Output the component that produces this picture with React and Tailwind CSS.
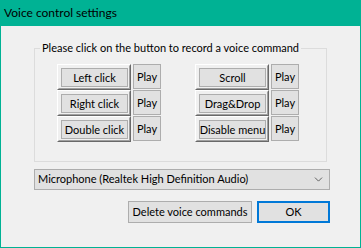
import { ChevronDown } from "lucide-react";

const font = { fontFamily: 'Lato, "Liberation Sans", sans-serif' };

function Toggle({ label }) {
  return (
    <div className="w-[74px] h-[26px] border border-t-white border-l-white border-r-[#696969] border-b-[#696969]">
      <div className="w-full h-full border border-t-[#f0f0f0] border-l-[#f0f0f0] border-r-[#a0a0a0] border-b-[#a0a0a0] pl-[2px] pr-[1px] pt-[2px] pb-[1px]">
        <div className="w-full h-full bg-[#e1e1e1] border border-[#adadad] flex items-center justify-center text-[11px] leading-none text-black whitespace-nowrap">
          {label}
        </div>
      </div>
    </div>
  );
}

function Play() {
  return (
    <div className="w-[28px] h-[25px] bg-[#e1e1e1] border border-[#adadad] flex items-center justify-center text-[11px] leading-none text-black">
      Play
    </div>
  );
}

function Row({ label }) {
  return (
    <div className="flex items-start gap-[2px]">
      <Toggle label={label} />
      <Play />
    </div>
  );
}

export default function App() {
  return (
    <div
      className="w-[361px] h-[248px] bg-[#f0f0f0] border-l border-r border-b border-[#00b294] flex flex-col"
      style={font}
    >
      {/* Title bar */}
      <div className="h-[26px] -mx-px bg-[#00b294] flex items-center pl-[4px] text-[12px] text-black">
        Voice control settings
      </div>

      {/* Group box */}
      <fieldset className="ml-[33px] mt-[14px] w-[293px] h-[122px] border border-[#dcdcdc]">
        <legend className="ml-[5px] px-[2px] text-[11px] leading-[16px] text-black whitespace-nowrap">
          Please click on the button to record a voice command
        </legend>
        <div className="flex gap-[34px] pl-[22px] pt-[8px]">
          <div className="flex flex-col">
            <Row label="Left click" />
            <Row label="Right click" />
            <Row label="Double click" />
          </div>
          <div className="flex flex-col">
            <Row label="Scroll" />
            <Row label="Drag&Drop" />
            <Row label="Disable menu" />
          </div>
        </div>
      </fieldset>

      {/* Microphone select */}
      <div className="ml-[33px] mt-[7px] w-[296px] h-[21px] bg-[#e1e1e1] border border-[#adadad] flex items-center justify-between pl-[3px] pr-[4px] text-[11px] text-black whitespace-nowrap">
        <span>Microphone (Realtek High Definition Audio)</span>
        <ChevronDown className="w-[13px] h-[13px] text-[#444]" strokeWidth={1.5} />
      </div>

      {/* Buttons */}
      <div className="flex justify-end gap-[5px] mr-[30px] mt-[11px]">
        <div className="w-[124px] h-[22px] bg-[#e1e1e1] border border-[#adadad] flex items-center justify-center text-[11px] text-black whitespace-nowrap">
          Delete voice commands
        </div>
        <div className="w-[73px] h-[22px] bg-[#e1e1e1] border-2 border-[#0078d7] flex items-center justify-center text-[11px] text-black">
          OK
        </div>
      </div>
    </div>
  );
}
